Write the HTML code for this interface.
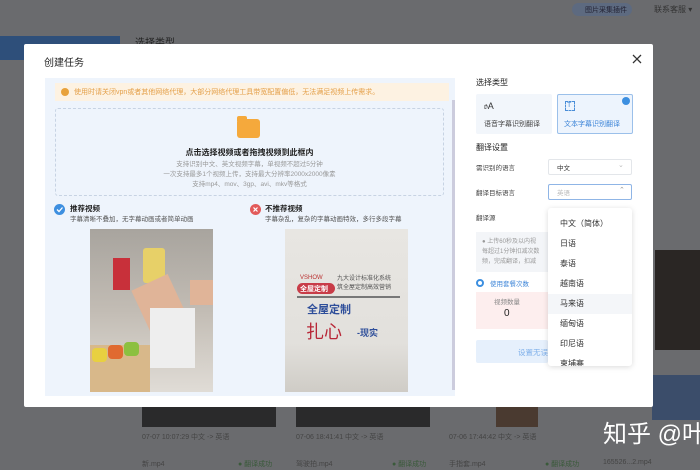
<!DOCTYPE html>
<html><head><meta charset="utf-8"><style>
*{margin:0;padding:0;box-sizing:border-box}
body{width:700px;height:470px;overflow:hidden;background:#6a6b6e;font-family:"Liberation Sans","Noto Sans CJK SC",sans-serif;position:relative}
.a{position:absolute}
.t{font-size:8px;color:#333;white-space:nowrap}
</style></head><body>
<div class="a" style="left:0;top:36px;width:120px;height:24px;background:#2e4f7a"></div>
<div class="a t" style="left:135px;top:34px;font-size:10px;color:#222">选择类型</div>
<div class="a" style="left:572px;top:3px;width:60px;height:13px;border-radius:7px;background:#5d6a80"></div>
<div class="a t" style="left:585px;top:5px;font-size:7px;color:#223">图片采集插件</div>
<div class="a t" style="left:654px;top:4px;font-size:8px;color:#333">联系客服 ▾</div>
<div class="a" style="left:142px;top:405px;width:134px;height:22px;background:#2a2a2b"></div>
<div class="a" style="left:296px;top:405px;width:134px;height:22px;background:#2a2a2b"></div>
<div class="a" style="left:496px;top:405px;width:42px;height:22px;background:#4a3a30"></div>
<div class="a" style="left:655px;top:250px;width:45px;height:100px;background:#2a2624"></div>
<div class="a" style="left:652px;top:375px;width:48px;height:45px;background:#3b4d6a"></div>
<div class="a t" style="left:142px;top:432px;font-size:7px;color:#444">07-07 10:07:29 中文 -> 英语</div>
<div class="a t" style="left:296px;top:432px;font-size:7px;color:#444">07-06 18:41:41 中文 -> 英语</div>
<div class="a t" style="left:449px;top:432px;font-size:7px;color:#444">07-06 17:44:42 中文 -> 英语</div>
<div class="a t" style="left:142px;top:459px;font-size:7px;color:#444">新.mp4</div>
<div class="a t" style="left:238px;top:459px;font-size:7px;color:#3a5a3a">● 翻译成功</div>
<div class="a t" style="left:296px;top:459px;font-size:7px;color:#444">驾驶拍.mp4</div>
<div class="a t" style="left:392px;top:459px;font-size:7px;color:#3a5a3a">● 翻译成功</div>
<div class="a t" style="left:449px;top:459px;font-size:7px;color:#444">手指套.mp4</div>
<div class="a t" style="left:545px;top:459px;font-size:7px;color:#3a5a3a">● 翻译成功</div>
<div class="a t" style="left:603px;top:459px;font-size:7px;color:#444">165526...2.mp4</div>
<div class="a t" style="left:603px;top:414px;font-size:24px;color:#fff">知乎 @叶</div>

<div class="a" style="left:24px;top:44px;width:629px;height:363px;background:#fff;border-radius:2px"></div>
<div class="a t" style="left:44px;top:54px;font-size:10px;color:#222">创建任务</div>
<svg class="a" style="left:631px;top:53px" width="12" height="12"><path d="M2 2L10 10M10 2L2 10" stroke="#333" stroke-width="1.3"/></svg>

<div class="a" style="left:45px;top:78px;width:410px;height:318px;background:#eef4fc"></div>
<div class="a" style="left:452px;top:100px;width:3px;height:290px;background:#ccd"></div>
<div class="a" style="left:55px;top:83px;width:394px;height:18px;background:#fdf2e2"></div>
<div class="a" style="left:61px;top:88px;width:8px;height:8px;border-radius:50%;background:#e8a23c"></div>
<div class="a t" style="left:74px;top:87px;font-size:7px;color:#e4a04a">使用时请关闭vpn或者其他网络代理，大部分网络代理工具带宽配置偏低，无法满足视频上传需求。</div>
<div class="a" style="left:55px;top:108px;width:389px;height:88px;border:1px dashed #c7d3e3;border-radius:3px"></div>
<div class="a" style="left:237px;top:119px;width:23px;height:19px;background:#f5a93c;border-radius:3px"></div>
<div class="a" style="left:237px;top:116px;width:10px;height:5px;background:#f5a93c;border-radius:2px 2px 0 0"></div>
<div class="a t" style="left:0;width:499px;text-align:center;top:147px;font-size:8px;font-weight:bold;color:#222">点击选择视频或者拖拽视频到此框内</div>
<div class="a t" style="left:0;width:499px;text-align:center;top:160px;font-size:6.5px;color:#999;line-height:10px">支持识别中文、英文视频字幕，单视频不超过5分钟<br>一次支持最多1个视频上传，支持最大分辨率2000x2000像素<br>支持mp4、mov、3gp、avi、mkv等格式</div>

<div class="a" style="left:54px;top:204px;width:11px;height:11px;border-radius:50%;background:#3d8fe0"></div>
<svg class="a" style="left:54px;top:204px" width="11" height="11"><path d="M3 5.5L5 7.5L8.5 3.5" stroke="#fff" stroke-width="1.3" fill="none"/></svg>
<div class="a t" style="left:70px;top:203px;font-size:7.5px;font-weight:bold;color:#222">推荐视频</div>
<div class="a t" style="left:70px;top:213px;font-size:6.5px;color:#555">字幕清晰不叠加，无字幕动画或者简单动画</div>
<div class="a" style="left:250px;top:204px;width:11px;height:11px;border-radius:50%;background:#e25a5a"></div>
<svg class="a" style="left:250px;top:204px" width="11" height="11"><path d="M3.5 3.5L7.5 7.5M7.5 3.5L3.5 7.5" stroke="#fff" stroke-width="1.2"/></svg>
<div class="a t" style="left:265px;top:203px;font-size:7.5px;font-weight:bold;color:#222">不推荐视频</div>
<div class="a t" style="left:265px;top:213px;font-size:6.5px;color:#555">字幕杂乱，复杂的字幕动画特效，多行多段字幕</div>

<div class="a" style="left:90px;top:229px;width:123px;height:163px;background:linear-gradient(180deg,#a8a49e,#c2bcb4 50%,#e0dcd6)"></div>
<div class="a" style="left:113px;top:258px;width:17px;height:32px;background:#c8303a"></div>
<div class="a" style="left:143px;top:248px;width:22px;height:35px;background:#e7d068;border-radius:3px"></div>
<div class="a" style="left:140px;top:280px;width:40px;height:50px;background:#e0b498;transform:rotate(-25deg)"></div>
<div class="a" style="left:190px;top:280px;width:23px;height:25px;background:#e0b498"></div>
<div class="a" style="left:90px;top:345px;width:60px;height:47px;background:#d8b88a"></div>
<div class="a" style="left:92px;top:348px;width:15px;height:14px;background:#e8d040;border-radius:4px"></div>
<div class="a" style="left:108px;top:345px;width:15px;height:14px;background:#e06a30;border-radius:4px"></div>
<div class="a" style="left:124px;top:342px;width:15px;height:14px;background:#8cc040;border-radius:4px"></div>
<div class="a" style="left:150px;top:308px;width:45px;height:60px;background:#eee"></div>

<div class="a" style="left:285px;top:229px;width:123px;height:163px;background:linear-gradient(180deg,#e8e6e2,#e2e0dc 70%,#cfccc6)"></div>
<div class="a t" style="left:300px;top:275px;font-size:6px;color:#b33">VSHOW</div>
<div class="a" style="left:297px;top:283px;width:38px;height:11px;background:#c83c48;border-radius:6px"></div>
<div class="a t" style="left:300px;top:284px;font-size:7px;color:#fff;font-weight:bold">全屋定制</div>
<div class="a t" style="left:337px;top:275px;font-size:6px;color:#555;line-height:9px">九大设计标准化系统<br>筑全屋定制高效营销</div>
<div class="a" style="left:297px;top:296px;width:103px;height:2px;background:#777"></div>
<div class="a t" style="left:307px;top:301px;font-size:11px;color:#2e4e9a;font-weight:bold">全屋定制</div>
<div class="a t" style="left:306px;top:318px;font-size:18px;color:#b82838">扎心</div>
<div class="a t" style="left:357px;top:326px;font-size:9px;color:#2e4e9a;font-weight:bold">-现实</div>

<div class="a t" style="left:476px;top:77px;font-size:8px;color:#222">选择类型</div>
<div class="a" style="left:476px;top:94px;width:76px;height:40px;background:#f2f6fb;border-radius:2px"></div>
<div class="a t" style="left:484px;top:101px;font-size:9px;color:#333">𝔬A</div>
<div class="a t" style="left:484px;top:119px;font-size:7px;color:#444">语音字幕识别翻译</div>
<div class="a" style="left:557px;top:94px;width:76px;height:40px;background:#edf4fd;border:1px solid #9bc0ea;border-radius:2px"></div>
<div class="a" style="left:622px;top:97px;width:8px;height:8px;border-radius:50%;background:#3d8fe0"></div>
<div class="a" style="left:565px;top:101px;width:10px;height:10px;border:1px dashed #4a8ed8"></div>
<div class="a t" style="left:567px;top:102px;font-size:7px;color:#4a8ed8">T</div>
<div class="a t" style="left:564px;top:119px;font-size:7px;color:#3d85d8">文本字幕识别翻译</div>
<div class="a t" style="left:476px;top:142px;font-size:8px;color:#222">翻译设置</div>
<div class="a t" style="left:476px;top:162px;font-size:6.5px;color:#444">需识别的语言</div>
<div class="a" style="left:548px;top:159px;width:84px;height:16px;border:1px solid #e3e6ea;border-radius:2px"></div>
<div class="a t" style="left:557px;top:162px;font-size:6.5px;color:#333">中文</div>
<div class="a t" style="left:618px;top:161px;font-size:7px;color:#bbb">⌄</div>
<div class="a t" style="left:476px;top:187px;font-size:6.5px;color:#444">翻译目标语言</div>
<div class="a" style="left:548px;top:184px;width:84px;height:16px;border:1px solid #8fb5e6;border-radius:2px"></div>
<div class="a t" style="left:557px;top:187px;font-size:6.5px;color:#bbb">英语</div>
<div class="a t" style="left:619px;top:186px;font-size:7px;color:#999">⌃</div>
<div class="a t" style="left:476px;top:212px;font-size:6.5px;color:#444">翻译源</div>
<div class="a" style="left:476px;top:232px;width:72px;height:40px;background:#f3f5f8"></div>
<div class="a t" style="left:482px;top:237px;font-size:6px;color:#999;line-height:10px">● 上传60秒及以内视<br>每超过1分钟扣减次数<br>频，完成翻译，扣减</div>
<div class="a" style="left:476px;top:279px;width:8px;height:8px;border-radius:50%;border:2.5px solid #3d8fe0"></div>
<div class="a t" style="left:490px;top:278px;font-size:6.5px;color:#3d85d8">使用套餐次数</div>
<div class="a" style="left:476px;top:292px;width:72px;height:37px;background:#fdeeee"></div>
<div class="a t" style="left:494px;top:296px;font-size:6.5px;color:#888">视频数量</div>
<div class="a t" style="left:504px;top:308px;font-size:10px;color:#222">0</div>
<div class="a" style="left:476px;top:340px;width:72px;height:23px;background:#e6f0fc;border-radius:2px"></div>
<div class="a t" style="left:518px;top:347px;font-size:7.5px;color:#7fb0ea">设置无误</div>

<div class="a" style="left:548px;top:208px;width:84px;height:158px;background:#fff;border-radius:3px;box-shadow:0 1px 6px rgba(0,0,0,.15);overflow:hidden">
<div class="a" style="left:0;top:86px;width:84px;height:20px;background:#f4f6f9"></div>
<div class="a t" style="left:12px;top:6px;font-size:8px;color:#333;line-height:20px">中文（简体）<br>日语<br>泰语<br>越南语<br>马来语<br>缅甸语<br>印尼语<br>柬埔寨</div>
</div>
</body></html>
